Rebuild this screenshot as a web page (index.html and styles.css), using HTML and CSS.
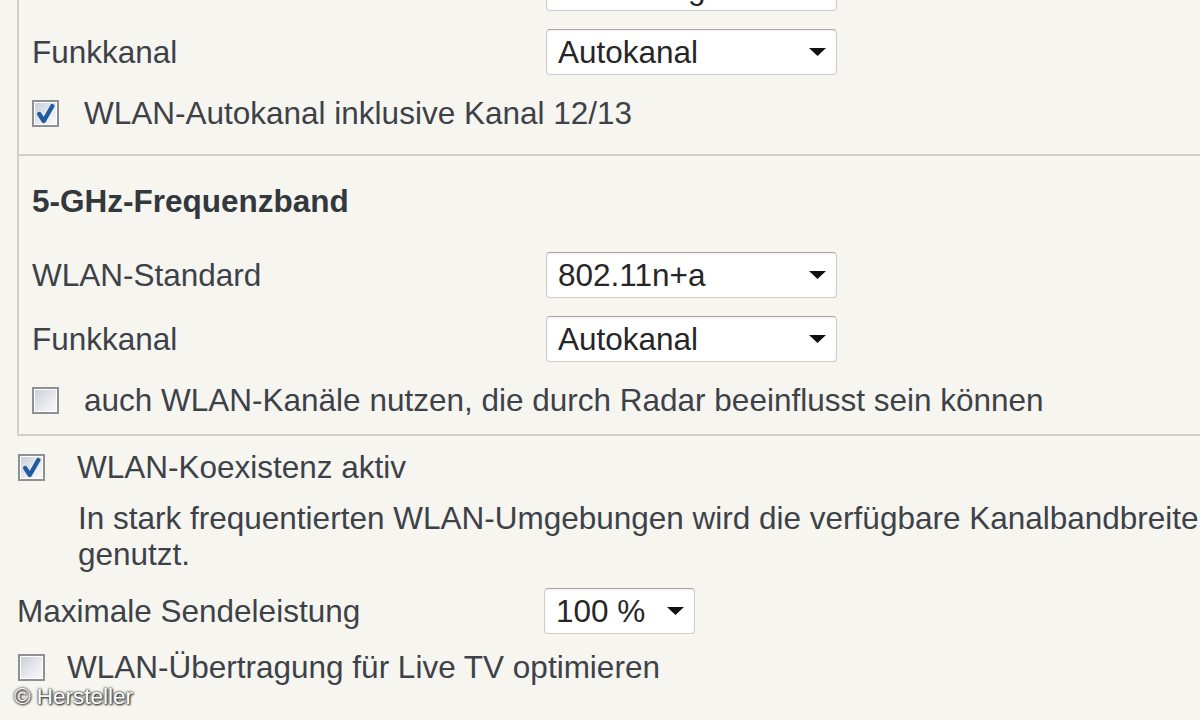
FILE: index.html
```html
<!DOCTYPE html>
<html lang="de">
<head>
    <meta charset="UTF-8">
    <title>WLAN Funkkanal</title>
    <link rel="stylesheet" href="styles.css">
</head>
<body>

    <div class="page">
        <!-- 2,4-GHz-Frequenzband (oben abgeschnitten) -->
        <div class="band first">
            <div class="row">
                <span class="label">WLAN-Standard</span>
                <div class="select">
                    <span>802.11n+g+b</span>
                    <svg viewBox="0 0 17 8"><path d="M0 0 H17 L8.5 8 Z"/></svg>
                </div>
            </div>
            <div class="row">
                <span class="label">Funkkanal</span>
                <div class="select">
                    <span>Autokanal</span>
                    <svg viewBox="0 0 17 8"><path d="M0 0 H17 L8.5 8 Z"/></svg>
                </div>
            </div>
            <div class="check-row">
                <span class="check on"><svg viewBox="0 0 20 20"><path d="M4.5 10.5 L8.5 16.5 L16 3.5"/></svg></span>
                <span>WLAN-Autokanal inklusive Kanal 12/13</span>
            </div>
        </div>

        <!-- 5-GHz-Frequenzband -->
        <div class="band">
            <h3 class="band-title">5-GHz-Frequenzband</h3>
            <div class="row">
                <span class="label">WLAN-Standard</span>
                <div class="select">
                    <span>802.11n+a</span>
                    <svg viewBox="0 0 17 8"><path d="M0 0 H17 L8.5 8 Z"/></svg>
                </div>
            </div>
            <div class="row">
                <span class="label">Funkkanal</span>
                <div class="select">
                    <span>Autokanal</span>
                    <svg viewBox="0 0 17 8"><path d="M0 0 H17 L8.5 8 Z"/></svg>
                </div>
            </div>
            <div class="check-row">
                <span class="check"></span>
                <span>auch WLAN-Kanäle nutzen, die durch Radar beeinflusst sein können</span>
            </div>
        </div>

        <div class="option coexist">
            <span class="check on"><svg viewBox="0 0 20 20"><path d="M4.5 10.5 L8.5 16.5 L16 3.5"/></svg></span>
            <span>WLAN-Koexistenz aktiv</span>
        </div>
        <p class="hint">In stark frequentierten WLAN-Umgebungen wird die verfügbare Kanalbandbreite zugunsten anderer Netze nur eingeschränkt<br>genutzt.</p>

        <div class="row power">
            <span class="label">Maximale Sendeleistung</span>
            <div class="select small">
                <span>100 %</span>
                <svg viewBox="0 0 17 8"><path d="M0 0 H17 L8.5 8 Z"/></svg>
            </div>
        </div>

        <div class="option livetv">
            <span class="check"></span>
            <span>WLAN-Übertragung für Live TV optimieren</span>
        </div>
    </div>

    <div class="credit">© Hersteller</div>

</body>
</html>
```

FILE: styles.css
```css
/* Grundlayout */
html, body {
    height: 720px;
    overflow: hidden;
}
body {
    margin: 0;
    background-color: #f7f5f0;
    font-family: "Liberation Sans", Arial, sans-serif;
    font-size: 31.5px;
    color: #3d4248;
    position: relative;
}
.page {
    margin-top: -36px;
    padding-left: 17px;
}
/* Rahmen der Frequenzbaender */
.band {
    border-left: 2px solid #cfcfcb;
    border-bottom: 2px solid #cfcfcb;
    padding: 0 0 13px 13px;
}
.band.first {
    padding-bottom: 20px;
}
.band-title {
    margin: 0 0 30px 0;
    padding-top: 25px;
    font-size: 31.5px;
    line-height: 40px;
    font-weight: bold;
    color: #33383d;
}
.row {
    display: flex;
    align-items: center;
    height: 48px;
    margin-bottom: 16px;
}
.label {
    width: 514px;
    flex-shrink: 0;
}
/* Auswahlfelder */
.select {
    box-sizing: border-box;
    width: 291px;
    height: 46px;
    display: flex;
    align-items: center;
    justify-content: space-between;
    padding: 0 10px 0 11px;
    background-color: #fff;
    border: 1px solid #cdcdcd;
    border-top-color: #a8a8a8;
    border-radius: 4px;
    box-shadow: inset 0 1px 2px rgba(0, 0, 0, 0.08);
    color: #262626;
}
.select svg {
    width: 17px;
    height: 8px;
    fill: #111;
}
.select.small {
    width: 151px;
}
/* Checkboxen */
.check-row, .option {
    display: flex;
    align-items: center;
    height: 42px;
    gap: 25px;
}
.check {
    box-sizing: border-box;
    width: 27px;
    height: 27px;
    flex-shrink: 0;
    border: 2px solid #8e9094;
    box-shadow: inset 0 0 0 1px #fff;
    background: linear-gradient(135deg, #c8cdd7 0%, #e9ebef 60%, #fafafa 100%);
    display: flex;
    align-items: center;
    justify-content: center;
}
.check svg {
    width: 23px;
    height: 23px;
    fill: none;
    stroke: #1f5b9f;
    stroke-width: 3.8;
    stroke-linecap: round;
    stroke-linejoin: round;
}
.coexist {
    margin-top: 10px;
    padding-left: 1px;
    gap: 32px;
}
.hint {
    margin: 12px 0 0 0;
    padding-left: 61px;
    line-height: 36px;
    white-space: nowrap;
}
.power {
    margin-top: 15px;
    margin-bottom: 0;
}
.power .label {
    width: 527px;
}
.livetv {
    margin-top: 11px;
    padding-left: 1px;
    gap: 22px;
}
/* Bildnachweis */
.credit {
    position: absolute;
    left: 14px;
    bottom: 10px;
    font-size: 22.5px;
    color: #fff;
    text-shadow: 0 0 2px #333, 0 0 3px #555, 1px 1px 2px #222;
}
```
